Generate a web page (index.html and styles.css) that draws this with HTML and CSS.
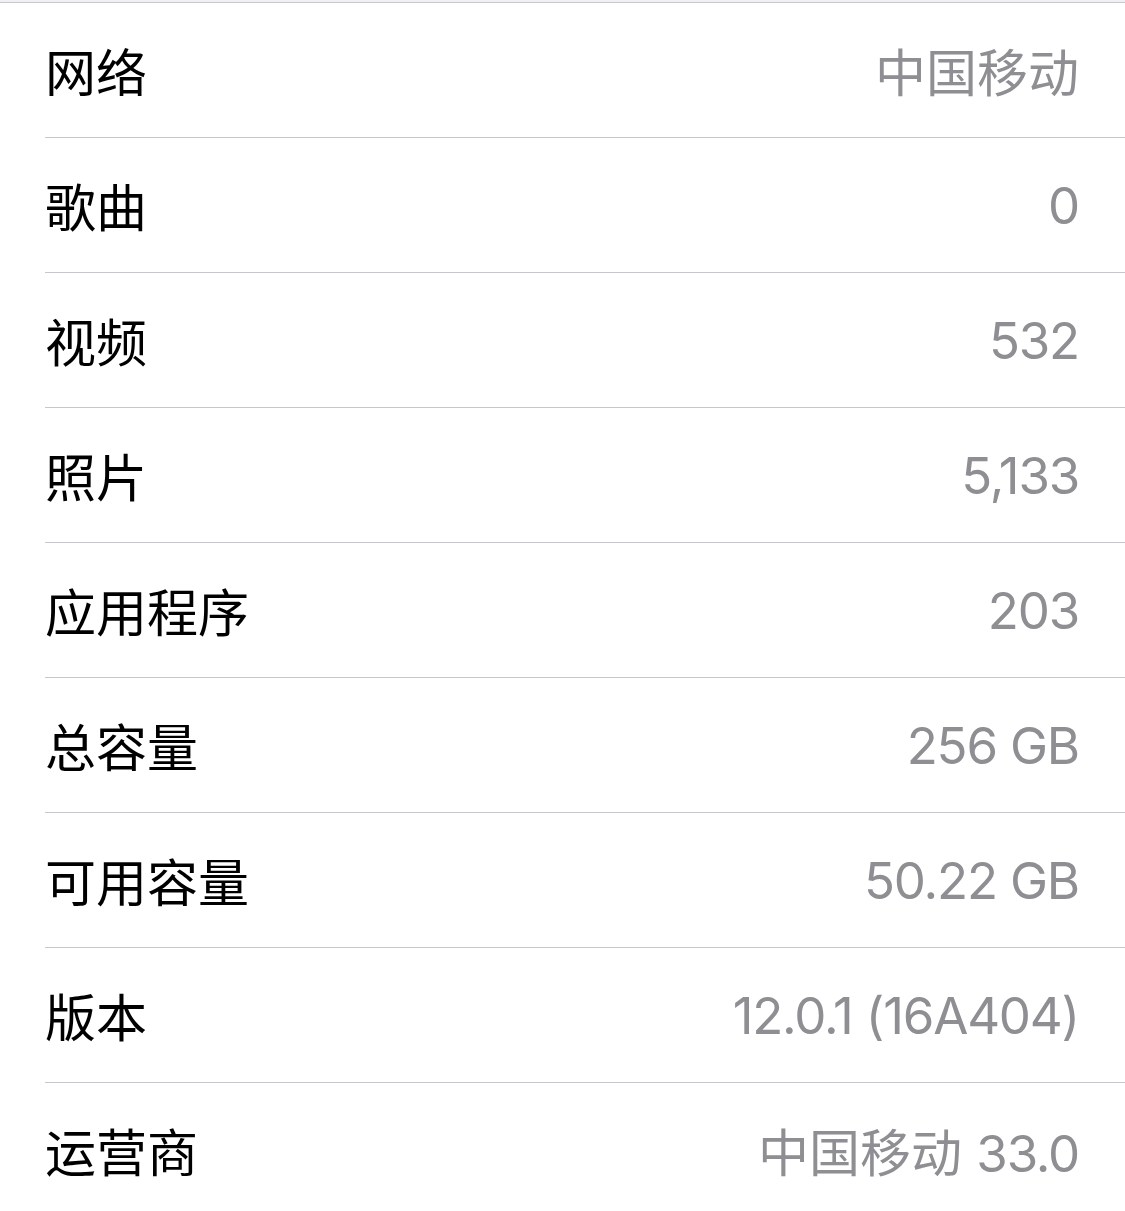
FILE: index.html
```html
<!DOCTYPE html>
<html lang="zh-CN">
<head>
    <meta charset="UTF-8">
    <meta name="viewport" content="width=device-width, initial-scale=1.0">
    <title>关于本机</title>
    <link rel="stylesheet" href="styles.css">
</head>
<body>
    <div class="list">
        <div class="row"><span class="label">网络</span><span class="value">中国移动</span></div>
        <div class="row"><span class="label">歌曲</span><span class="value num">0</span></div>
        <div class="row"><span class="label">视频</span><span class="value num">532</span></div>
        <div class="row"><span class="label">照片</span><span class="value num">5,133</span></div>
        <div class="row"><span class="label">应用程序</span><span class="value num">203</span></div>
        <div class="row"><span class="label">总容量</span><span class="value num">256 GB</span></div>
        <div class="row"><span class="label">可用容量</span><span class="value num">50.22 GB</span></div>
        <div class="row"><span class="label">版本</span><span class="value num">12.0.1 (16A404)</span></div>
        <div class="row"><span class="label">运营商</span><span class="value">中国移动 <span class="num">33.0</span></span></div>
    </div>
</body>
</html>
```

FILE: styles.css
```css
body {
    margin: 0;
    padding-top: 2px;
    background: #efeff4;
    font-family: Inter, "Noto Sans CJK SC", sans-serif;
    font-size: 51px;
    overflow: hidden;
}
.list {
    background: #fff;
    border-top: 1px solid #c8c7cc;
    min-height: calc(100vh - 3px);
}
.row {
    display: flex;
    align-items: center;
    justify-content: space-between;
    height: 134px;
    margin-left: 45px;
    padding-right: 46px;
    border-bottom: 1px solid #c8c7cc;
}
.row:last-child {
    border-bottom: none;
}
.label {
    color: #000;
}
.value {
    color: #8e8e93;
}
.num {
    letter-spacing: -1.2px;
}
```
